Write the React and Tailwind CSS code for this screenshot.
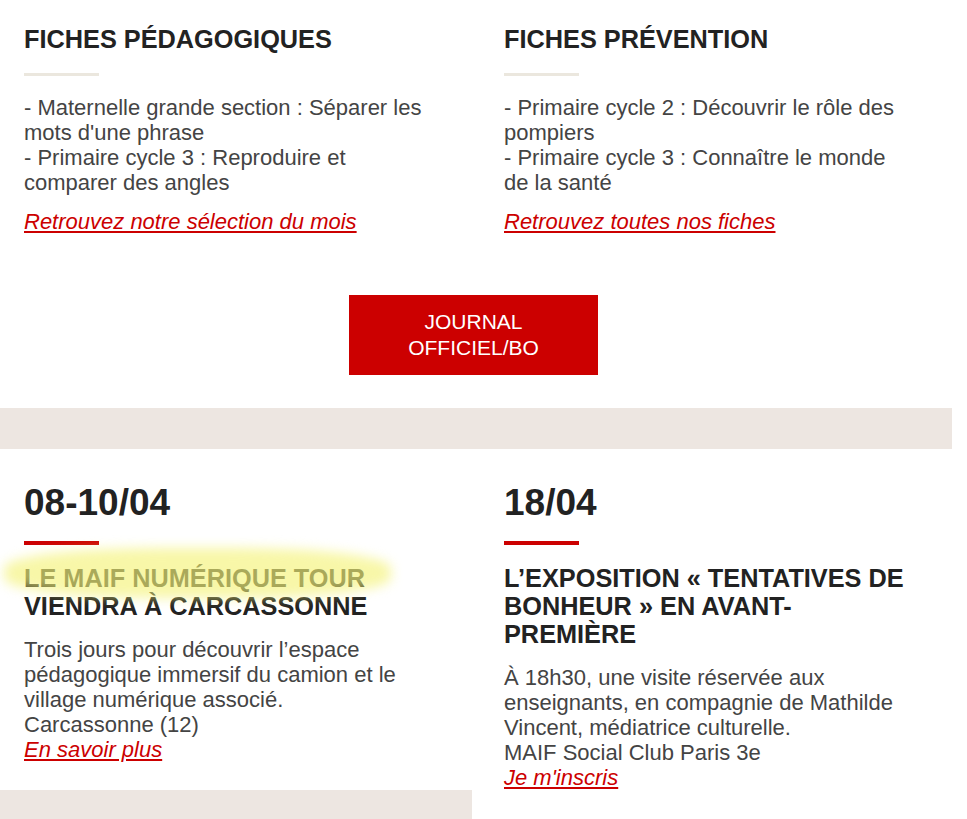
// App.jsx – newsletter bloc "fiches" + agenda
const FONT = { fontFamily: '"Liberation Sans", Arial, sans-serif' };

function Fiche({ titre, lignes, lien, className }) {
  return (
    <div className={`pl-6 ${className}`}>
      <h2 className="text-[25.3px] leading-[28px] font-bold text-[#222] pt-[25px]">{titre}</h2>
      <div className="w-[75px] h-[3px] bg-[#ebe7de] mt-[20px]" />
      <div className="mt-[19px] text-[22px] leading-[25px] text-[#444]">
        {lignes.map((l) => (
          <p key={l}>{l}</p>
        ))}
      </div>
      <a href="#" className="block mt-[14px] text-[22px] leading-[25px] italic underline text-[#cc0000]">
        {lien}
      </a>
    </div>
  );
}

function Evenement({ date, titre, surligne, texte, lieu, lien, className }) {
  return (
    <div className={`pl-6 ${className}`}>
      <div className="text-[37px] leading-[40px] font-bold text-[#222] pt-[34px]">{date}</div>
      <div className="w-[75px] h-[4px] bg-[#cc0000] mt-[18px]" />
      <h3 className="mt-[19px] text-[25.3px] leading-[28px] font-bold text-[#222] uppercase">
        {surligne && (
          <span className="relative">
            {surligne}
            <span className="absolute -left-[20px] -right-[26px] -top-[16px] -bottom-[6px] rounded-[40%] bg-[#f4f27a]/65 blur-[6px]" />
            <br />
          </span>
        )}
        {titre}
      </h3>
      <div className="mt-[17px] text-[22px] leading-[25px] text-[#444]">
        <p>{texte}</p>
        <p>{lieu}</p>
      </div>
      <a href="#" className="block text-[22px] leading-[25px] italic underline text-[#cc0000]">
        {lien}
      </a>
    </div>
  );
}

export default function App() {
  return (
    <div className="w-[952px] bg-white" style={FONT}>
      {/* ── Fiches ── */}
      <section className="flex">
        <Fiche
          className="w-[480px] shrink-0 pr-[44px]"
          titre="FICHES PÉDAGOGIQUES"
          lignes={[
            "- Maternelle grande section : Séparer les mots d'une phrase",
            '- Primaire cycle 3 : Reproduire et comparer des angles',
          ]}
          lien="Retrouvez notre sélection du mois"
        />
        <Fiche
          className="flex-1 pr-[36px]"
          titre="FICHES PRÉVENTION"
          lignes={[
            '- Primaire cycle 2 : Découvrir le rôle des pompiers',
            '- Primaire cycle 3 : Connaître le monde de la santé',
          ]}
          lien="Retrouvez toutes nos fiches"
        />
      </section>

      <div className="flex justify-center pr-[5px] pt-[61px] pb-[33px]">
        <a
          href="#"
          className="w-[249px] h-[80px] bg-[#cc0000] text-white text-[21px] leading-[26px] flex items-center justify-center text-center"
        >
          JOURNAL
          <br />
          OFFICIEL/BO
        </a>
      </div>

      <div className="h-[41px] bg-[#ede6e1]" />

      {/* ── Agenda ── */}
      <section className="flex">
        <Evenement
          className="w-[480px] shrink-0 pr-[44px]"
          date="08-10/04"
          surligne="LE MAIF NUMÉRIQUE TOUR"
          titre="VIENDRA À CARCASSONNE"
          texte="Trois jours pour découvrir l’espace pédagogique immersif du camion et le village numérique associé."
          lieu="Carcassonne (12)"
          lien="En savoir plus"
        />
        <Evenement
          className="flex-1 pr-[36px]"
          date="18/04"
          titre="L’EXPOSITION « TENTATIVES DE BONHEUR » EN AVANT-PREMIÈRE"
          texte="À 18h30, une visite réservée aux enseignants, en compagnie de Mathilde Vincent, médiatrice culturelle."
          lieu="MAIF Social Club Paris 3e"
          lien="Je m'inscris"
        />
      </section>

      <div className="flex">
        <div className="w-[472px] h-[40px] bg-[#ede6e1]" />
      </div>
    </div>
  );
}
